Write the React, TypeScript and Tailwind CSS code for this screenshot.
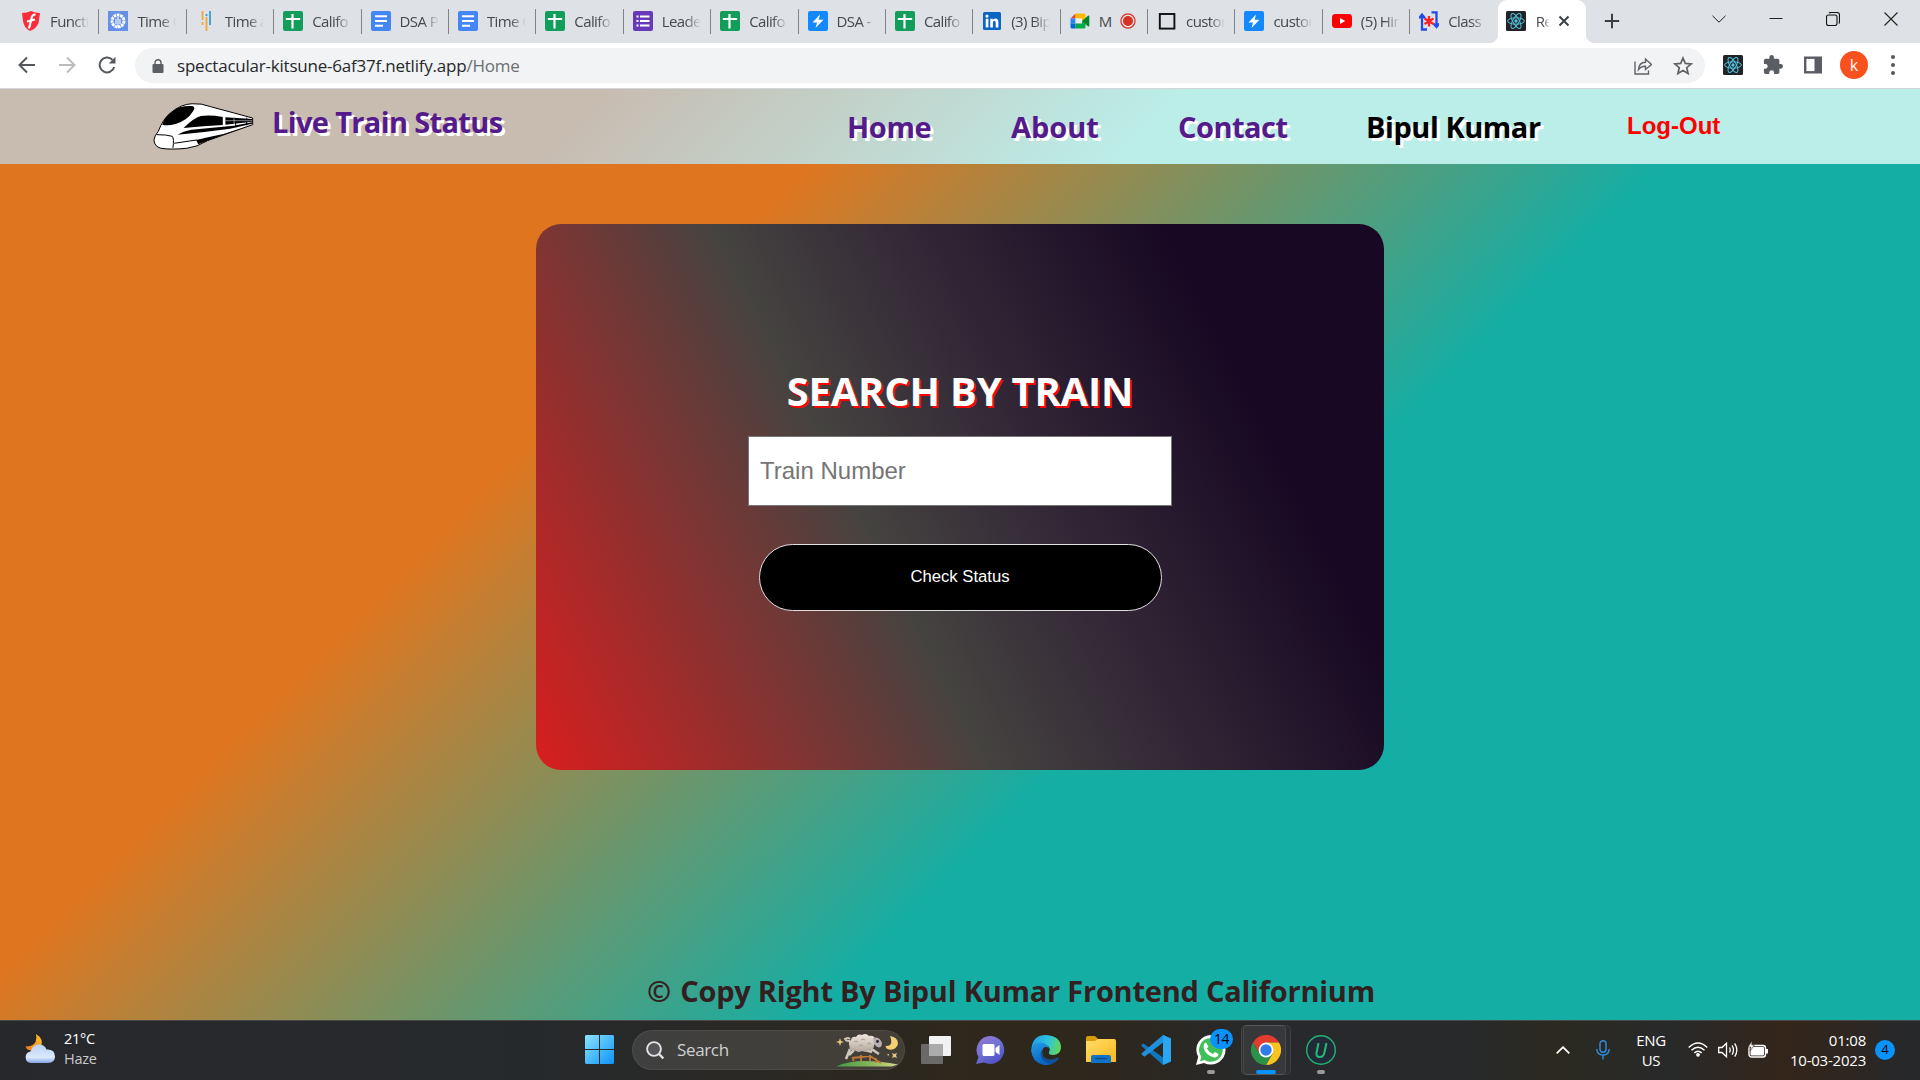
import type { ReactNode } from 'react';

/* ---------- favicons ---------- */

const Shield = () => (
  <svg viewBox="0 0 20 20" className="h-5 w-5">
    <path d="M1 2 Q6 2 10 0 Q14 2 19 2 L17.5 12 Q16 17 9 20 Q3 17 2 10Z" fill="#fb2c3a" />
    <path d="M14.5 3.500 Q11 3.500 10.500 7.500 L8 17.500 M6 10.500 L14 8.500" stroke="#fff" strokeWidth="2.200" fill="none" />
  </svg>
);
const Gear = () => (
  <svg viewBox="0 0 20 20" className="h-5 w-5">
    <rect width="20" height="20" fill="#6490e6" />
    <circle cx="10" cy="10" r="6" fill="none" stroke="#fff" strokeWidth="3" strokeDasharray="2.6 .7" />
    <path d="M10 6 V17 M8 8 V13 M12 8 V13" stroke="#fff" strokeWidth="1.100" />
  </svg>
);
const Bars = () => (
  <svg viewBox="0 0 20 20" className="h-5 w-5">
    <path d="M6.500 0 V9 M6.500 11 V14 M10.500 6 V20" stroke="#f2a541" strokeWidth="1.800" />
    <path d="M10.500 3 V5 M14 0 V14" stroke="#2ba3dc" strokeWidth="1.800" />
  </svg>
);
const Sheets = () => (
  <svg viewBox="0 0 20 20" className="h-5 w-5">
    <rect width="20" height="20" rx="2" fill="#129e5a" />
    <path d="M9.500 3 V17.500 M2.800 8 H17.200" stroke="#fff" strokeWidth="2.200" />
  </svg>
);
const Docs = () => (
  <svg viewBox="0 0 20 20" className="h-5 w-5">
    <rect width="20" height="20" rx="2" fill="#4486f4" />
    <path d="M4 5.200 H16 M4 10 H16 M4 14.800 H12" stroke="#fff" strokeWidth="2" />
  </svg>
);
const Forms = () => (
  <svg viewBox="0 0 20 20" className="h-5 w-5">
    <rect width="20" height="20" rx="2" fill="#673ab7" />
    <path d="M7 5.500 H16.500 M7 10 H16.500 M7 14.500 H16.500 M3.500 5.500 H5.500 M3.500 10 H5.500 M3.500 14.500 H5.500" stroke="#fff" strokeWidth="2" />
  </svg>
);
const Bolt = () => (
  <svg viewBox="0 0 20 20" className="h-5 w-5">
    <rect width="20" height="20" rx="2" fill="#1389fd" />
    <path d="M12 3.500 L4.500 11.500 H9 L7.500 17 L15.500 8.700 H10.700Z" fill="#fff" />
  </svg>
);
const LinkedIn = () => (
  <svg viewBox="0 0 20 20" className="h-5 w-5">
    <rect x="1" y="1" width="18" height="18" rx="1.500" fill="#0a66c2" />
    <rect x="3.700" y="7.700" width="2.700" height="8.700" fill="#fff" />
    <circle cx="5" cy="5.100" r="1.600" fill="#fff" />
    <path d="M8.200 7.700 H10.800 V9 Q11.600 7.500 13.500 7.500 Q16.400 7.500 16.400 11 V16.400 H13.700 V11.700 Q13.700 9.800 12.400 9.800 Q10.900 9.800 10.900 11.800 V16.400 H8.200Z" fill="#fff" />
  </svg>
);
const Meet = () => (
  <svg viewBox="0 0 20 20" className="h-5 w-5">
    <path d="M0.500 7.500 L5.500 2.500 V7.500Z" fill="#e94235" />
    <path d="M5.500 2.500 H14 Q15.500 2.500 15.500 4 V8 L12 10 V7.500 H5.500Z" fill="#ffba00" />
    <path d="M.5 7.500 H5.500 V12.500 H.5Z" fill="#2684fc" />
    <path d="M.5 12.500 H5.500 V17.500 H2 Q.5 17.500 .5 16Z" fill="#0066da" />
    <path d="M5.500 7.500 H12 V12.500 H5.500Z" fill="#e9eef0" />
    <path d="M5.500 12.500 H12 V10 L15.500 12 V16 Q15.500 17.500 14 17.500 H5.500Z" fill="#00ac47" />
    <path d="M12 10 L18 4.800 Q19.300 4.200 19.300 5.500 V14.800 Q19.300 16 18 15.200Z" fill="#00832d" />
  </svg>
);
const Square = () => (
  <svg viewBox="0 0 20 20" className="h-5 w-5">
    <rect x="2.800" y="3" width="14.600" height="14.600" fill="none" stroke="#111" strokeWidth="1.900" />
  </svg>
);
const YouTube = () => (
  <svg viewBox="0 0 20 20" className="h-5 w-5">
    <rect x="0" y="3" width="20" height="14" rx="3.400" fill="#f00" />
    <path d="M8 7 L13.300 10 L8 13Z" fill="#fff" />
  </svg>
);
const ClassIcon = () => (
  <svg viewBox="0 0 20 20" className="h-5 w-5">
    <path d="M3 5 V18.500 H8 M0 7.200 L3 3.600 L6 7.200 M12.500 1.300 H17.500 V14 M14.500 12.500 L17.500 16 L20.300 12.500" fill="none" stroke="#1f4be8" strokeWidth="2.300" />
    <path d="M10 5 V15.500 M5.500 7.600 L14.500 12.900 M14.500 7.600 L5.500 12.900" stroke="#f22" strokeWidth="2.300" />
  </svg>
);
const ReactIcon = () => (
  <svg viewBox="0 0 20 20" className="h-5 w-5">
    <rect width="20" height="20" rx="1.500" fill="#212327" />
    <g fill="none" stroke="#53c1de" strokeWidth="1">
      <ellipse cx="10" cy="10" rx="8.400" ry="3.200" />
      <ellipse cx="10" cy="10" rx="8.400" ry="3.200" transform="rotate(60 10 10)" />
      <ellipse cx="10" cy="10" rx="8.400" ry="3.200" transform="rotate(120 10 10)" />
    </g>
    <circle cx="10" cy="10" r="1.700" fill="#53c1de" />
  </svg>
);
const Record = () => (
  <svg viewBox="0 0 16 16" className="ml-[1px] h-4 w-4 shrink-0">
    <circle cx="8" cy="8" r="7.100" fill="none" stroke="#d93025" strokeWidth="1.200" />
    <circle cx="8" cy="8" r="5" fill="#d93025" />
  </svg>
);

type TabInfo = { icon: ReactNode; title: string; rec?: boolean };
const tabs: TabInfo[] = [
  { icon: <Shield />, title: 'Functi' },
  { icon: <Gear />, title: 'Time C' },
  { icon: <Bars />, title: 'Time a' },
  { icon: <Sheets />, title: 'Califo' },
  { icon: <Docs />, title: 'DSA P' },
  { icon: <Docs />, title: 'Time C' },
  { icon: <Sheets />, title: 'Califo' },
  { icon: <Forms />, title: 'Leade' },
  { icon: <Sheets />, title: 'Califo' },
  { icon: <Bolt />, title: 'DSA -' },
  { icon: <Sheets />, title: 'Califo' },
  { icon: <LinkedIn />, title: '(3) Bip' },
  { icon: <Meet />, title: 'M', rec: true },
  { icon: <Square />, title: 'custor' },
  { icon: <Bolt />, title: 'custor' },
  { icon: <YouTube />, title: '(5) Hin' },
  { icon: <ClassIcon />, title: 'Class' },
];

function TabStrip() {
  return (
    <div className="flex h-[43px] bg-[#dee1e6] pl-[12px] text-[15px] tracking-[-0.6px] text-[#45494d]">
      {tabs.map((t, i) => (
        <div key={i} className="relative flex w-[87.400px] shrink-0 items-center pb-[2px] pl-[9px]">
          <div className="shrink-0">{t.icon}</div>
          <span
            className={
              'ml-[9px] overflow-hidden whitespace-nowrap leading-5 ' +
              (t.rec ? 'w-[20px]' : 'w-[39px] [mask-image:linear-gradient(to_right,black_60%,transparent)]')
            }
          >
            {t.title}
          </span>
          {t.rec && <Record />}
          {i < 16 && <i className="absolute right-0 top-[9px] h-[25px] w-px bg-[#808388]" />}
        </div>
      ))}
      <div className="relative flex w-[88px] shrink-0 items-center rounded-t-[9px] bg-white pb-[2px] pl-[8px]">
        <i className="absolute -left-[9px] bottom-0 h-[9px] w-[9px] bg-[radial-gradient(circle_at_0_0,transparent_9px,white_9.500px)]" />
        <i className="absolute -right-[9px] bottom-0 h-[9px] w-[9px] bg-[radial-gradient(circle_at_100%_0,transparent_9px,white_9.500px)]" />
        <div className="shrink-0"><ReactIcon /></div>
        <span className="ml-[10px] w-[14px] overflow-hidden whitespace-nowrap leading-5 [mask-image:linear-gradient(to_right,black_50%,transparent)]">Re</span>
        <svg viewBox="0 0 12 12" className="ml-[8px] h-3 w-3"><path d="M1.500 1.500 L10.500 10.500 M10.500 1.500 L1.500 10.500" stroke="#3c4043" strokeWidth="2" /></svg>
      </div>
      <svg viewBox="0 0 16 16" className="ml-[18px] mt-[13px] h-4 w-4"><path d="M8 .8 V15.200 M.8 8 H15.200" stroke="#3c4043" strokeWidth="2" /></svg>
      <div className="ml-auto flex h-[37px] items-center text-black">
        <svg viewBox="0 0 14 8" className="mr-[43px] h-2 w-[14px]"><path d="M.5 .8 L7 7.200 L13.500 .8" fill="none" stroke="#222" /></svg>
        <svg viewBox="0 0 14 14" className="mr-[43px] h-[14px] w-[14px]"><path d="M.5 6.500 H13.500" stroke="#222" /></svg>
        <svg viewBox="0 0 14 14" className="mr-[44px] h-[14px] w-[14px]"><rect x=".5" y="3" width="10.500" height="10.500" rx="2" fill="none" stroke="#111" strokeWidth="1.100" /><path d="M3 1 Q3.600 .5 5 .5 H11 Q13.500 .5 13.500 3 V9.500 Q13.500 11 12.800 11.500" fill="none" stroke="#111" strokeWidth="1.100" /></svg>
        <svg viewBox="0 0 14 14" className="mr-[22px] h-[14px] w-[14px]"><path d="M.5 .5 L13.500 13.500 M13.500 .5 L.5 13.500" stroke="#222" strokeWidth="1.100" /></svg>
      </div>
    </div>
  );
}

function Toolbar() {
  return (
    <div className="flex h-[46px] items-center border-b border-[#d5d6d9] bg-white pb-px pl-[18px]">
      <svg viewBox="0 0 18 18" className="h-[18px] w-[18px]"><path d="M17 9 H1.500 M9 1.500 L1.500 9 L9 16.500" fill="none" stroke="#54585d" strokeWidth="2" /></svg>
      <svg viewBox="0 0 18 18" className="ml-[22px] h-[18px] w-[18px]"><path d="M1 9 H16.500 M9 1.500 L16.500 9 L9 16.500" fill="none" stroke="#babcbe" strokeWidth="2" /></svg>
      <svg viewBox="0 0 18 18" className="ml-[22px] h-[18px] w-[18px]"><path d="M16.200 11 A7.400 7.400 0 1 1 14.400 3.800" fill="none" stroke="#54585d" strokeWidth="2" /><path d="M17.500 .8 V7.500 H10.800Z" fill="#54585d" /></svg>
      <div className="ml-[19px] mt-px flex h-[35px] w-[1570px] items-center rounded-full bg-[#f1f3f4] pl-[17px]">
        <svg viewBox="0 0 12 14" className="h-[14px] w-[12px]"><rect x=".5" y="5" width="11" height="9" rx="1" fill="#5b5f64" /><path d="M3 6 V3.700 A3 3 0 0 1 9 3.700 V6" fill="none" stroke="#5b5f64" strokeWidth="1.400" /></svg>
        <span className="ml-[13px] whitespace-nowrap text-[17px] tracking-[-0.220px] text-[#26282b]">
          spectacular-kitsune-6af37f.netlify.app<span className="text-[#6a6e73]">/Home</span>
        </span>
        <svg viewBox="0 0 18 18" className="ml-auto h-[18px] w-[18px]"><path d="M1 4.500 V17 H14.500 V13.500" fill="none" stroke="#5f6368" strokeWidth="1.400" /><path d="M4.500 12.500 Q5 5.500 11.500 5.300 V2 L17.500 7.500 L11.500 12.500 V9.200 Q7 9 4.500 12.500Z" fill="none" stroke="#5f6368" strokeWidth="1.400" /></svg>
        <svg viewBox="0 0 20 20" className="ml-[21px] mr-[12px] h-5 w-5"><path d="M10 2 L12.300 7.400 L18.200 7.900 L13.700 11.700 L15.100 17.400 L10 14.400 L4.900 17.400 L6.300 11.700 L1.800 7.900 L7.700 7.400Z" fill="none" stroke="#5f6368" strokeWidth="1.700" /></svg>
      </div>
      <div className="ml-[18px]"><ReactIcon /></div>
      <svg viewBox="1 1 22 22" className="ml-[20px] h-5 w-5"><path d="M20.500 11H19V7a2 2 0 0 0-2-2h-4V3.500a2.500 2.500 0 0 0-5 0V5H4a2 2 0 0 0-2 2v3.800h1.500a2.700 2.700 0 0 1 0 5.400H2V20a2 2 0 0 0 2 2h3.800v-1.500a2.700 2.700 0 0 1 5.400 0V22H17a2 2 0 0 0 2-2v-4h1.500a2.500 2.500 0 0 0 0-5z" fill="#5a5e64" /></svg>
      <svg viewBox="0 0 18 18" className="ml-[21px] h-[18px] w-[18px]"><rect x="1.200" y="1.700" width="15.600" height="14.600" fill="none" stroke="#5a5e64" strokeWidth="2.400" /><rect x="10.500" y="1" width="7" height="16" fill="#5a5e64" /></svg>
      <div className="ml-[18px] flex h-7 w-7 items-center justify-center rounded-full bg-[#f8511d] pb-px text-[16px] text-white">k</div>
      <div className="ml-[23px] flex flex-col gap-[4px]">
        <i className="h-1 w-1 rounded-full bg-[#54585d]" /><i className="h-1 w-1 rounded-full bg-[#54585d]" /><i className="h-1 w-1 rounded-full bg-[#54585d]" />
      </div>
    </div>
  );
}

/* ---------- page ---------- */

const TrainLogo = () => (
  <svg viewBox="68 50 304 144" className="h-[48px] w-[101px] shrink-0">
    <path d="M71 164 Q72 152 84 138 Q98 100 122 82 Q152 56 186 55 Q214 53 242 64 L368 98 V118 L232 166 Q200 186 170 189 Q120 194 92 189 Q72 184 71 164Z" fill="#fff" stroke="#000" strokeWidth="3" />
    <path d="M96 118 Q104 92 126 78 Q148 60 186 62 Q198 66 188 78 Q172 104 136 116 Q112 122 96 118Z" />
    <path d="M160 128 Q190 98 212 92 Q240 88 278 95 V119 Q220 122 160 128Z" />
    <path d="M286 96 L366 101 V109 L286 118Z" />
    <path d="M142 148 Q158 138 184 133 L310 121 L366 111 V115 L300 130 Q220 141 142 148Z" />
    <path d="M198 164 Q240 154 280 146 L356 122 L270 152 L204 177 Z" />
    <path d="M78 148 Q110 148 126 153 Q132 160 128 188 M132 174 L200 164 M350 97 V120 M314 97 L318 126" fill="none" stroke="#000" strokeWidth="3" />
    <path d="M283 90 V124 M312 96 V122 M286 106 H366" stroke="#fff" strokeWidth="1.500" />
  </svg>
);

function Header() {
  return (
    <header className="flex h-[75px] bg-[linear-gradient(135deg,#c8bbb0_30%,#bbeee9_60%)] pl-[153px] text-[29px] font-bold leading-[40px] text-[#551a8b] [&_span]:whitespace-nowrap [&_span]:[text-shadow:3px_3px_#fff]">
      <div className="mt-[13px]"><TrainLogo /></div>
      <span className="ml-[18px] mt-[13px] w-[575px] tracking-[-0.650px]">Live Train Status</span>
      <span className="mt-[18px] w-[164px] tracking-[-0.350px]">Home</span>
      <span className="mt-[18px] w-[167px]">About</span>
      <span className="mt-[18px] w-[188px] tracking-[-0.500px]">Contact</span>
      <span className="mt-[18px] w-[261px] tracking-[-0.450px] text-black">Bipul Kumar</span>
      <div className="mt-[17px] whitespace-nowrap font-['Liberation_Sans',Arial,sans-serif] text-[24px] text-[#f00]">Log-Out</div>
    </header>
  );
}

function SearchCard() {
  return (
    <section className="mx-auto mt-[60px] flex h-[546px] w-[848px] flex-col items-center rounded-[25px] bg-[linear-gradient(63deg,#d91e1e_0%,#454340_40.300%,#322736_58%,#180823_80.300%)]">
      <h1 className="mt-[139px] whitespace-nowrap text-[40px] font-bold leading-[56px] tracking-[-0.250px] text-white [text-shadow:1.500px_1.500px_#f00]">SEARCH BY TRAIN</h1>
      <input
        placeholder="Train Number"
        className="mt-[17px] h-[70px] w-[424px] border border-[#767676] bg-white pl-[11px] font-['Liberation_Sans',Arial,sans-serif] text-[24px] placeholder:text-[#757575]"
      />
      <button className="mt-[38px] h-[67px] w-[403px] rounded-[34px] border-[1.500px] border-[#e2dfe1] bg-black pb-px font-['Liberation_Sans',Arial,sans-serif] text-[16.700px] text-white">
        Check Status
      </button>
    </section>
  );
}

/* ---------- taskbar ---------- */

const Weather = () => (
  <svg viewBox="0 0 30 30" className="h-[30px] w-[30px]">
    <defs>
      <linearGradient id="moon" x1="0" y1="1" x2="1" y2="0"><stop stopColor="#f57a17" /><stop offset="1" stopColor="#fbc52f" /></linearGradient>
      <linearGradient id="cloud" x1="0" y1="0" x2="0" y2="1"><stop stopColor="#b9d2f7" /><stop offset=".7" stopColor="#dbe8fa" /><stop offset="1" stopColor="#86a5e4" /></linearGradient>
    </defs>
    <path d="M11 0 Q19 5 16 12 Q12 18 4 16 Q1 15 .5 12.500 Q8 12.500 10.500 8 Q12 4 11 0Z" fill="url(#moon)" />
    <path d="M6 29 A5.800 5.800 0 0 1 5.500 17.500 Q7.500 10.500 14 10.500 Q19.500 10.500 21.500 15.500 Q30 15 30 22.500 Q30 29 23 29Z" fill="url(#cloud)" />
  </svg>
);
const Start = () => (
  <svg viewBox="0 0 29 29" className="h-[29px] w-[29px]">
    <defs><linearGradient id="win" x1="0" y1="0" x2="1" y2="1"><stop stopColor="#8be3ff" /><stop offset="1" stopColor="#0c93f8" /></linearGradient></defs>
    <path d="M1 0H14V14H0V1Z M15 0H28L29 1V14H15Z M0 15H14V29H1L0 28Z M15 15H29V28L28 29H15Z" fill="url(#win)" />
  </svg>
);
const Sheep = () => (
  <svg viewBox="0 0 64 35" className="h-[35px] w-[64px]">
    <defs>
      <linearGradient id="hill" x1="0" y1="0" x2="1" y2="0"><stop stopColor="#3f9a48" /><stop offset=".5" stopColor="#7fb257" /><stop offset="1" stopColor="#d3d98a" /></linearGradient>
      <linearGradient id="wool" x1="0" y1="0" x2="0" y2="1"><stop stopColor="#efe8e0" /><stop offset="1" stopColor="#b5a79c" /></linearGradient>
    </defs>
    <path d="M0 34.500 Q12 29 28 29 Q46 29 62 32.500 L56 34.500Z" fill="url(#hill)" />
    <path d="M17 29 L18 25 M25 29 V23 M34 29 V23 M40 31 V26 M16 26 L34 24 L45 31" stroke="#bd7b36" strokeWidth="1.800" fill="none" />
    <path d="M4 6 L5 9 L8 10 L5 11 L4 14 L3 11 L0 10 L3 9Z M51.500 22 h1.500 v1.500 h-1.500z M56 21 l2.500 1 2.500 -1 -1 2.500 1 2.500 -2.500 -1 -2.500 1 1 -2.500z M8 6 h1.500 v1.500 h-1.500z" fill="#e6c67c" />
    <path d="M14 17 L10 27 M18 18 L13 23 M34 16 L43 22 M29 18 L36 20" stroke="#cfc6bc" strokeWidth="2.600" />
    <path d="M14 9 Q8 9 10 6.500 Q12 5 14 7" stroke="#cfc6bc" strokeWidth="1.800" fill="none" />
    <path d="M15 8 Q16 4 20 5 Q22 1.500 26 3 Q30 0.500 33 4 Q38 3 39 7 Q42 10 38 13 Q38 18 33 17.500 Q30 21 26 19 Q22 21 19 18.500 Q13 19 13.500 14 Q11.500 10 15 8Z" fill="url(#wool)" />
    <path d="M18 10 Q20 8 22 10 M25 8 Q27 6 29 8 M23 14 Q25 12 27 14 M31 12 Q33 10 35 12" stroke="#a99c91" strokeWidth="1" fill="none" />
    <path d="M37 6 Q43 4 46 11 Q46 15 43 15.500 Q38 15 37 6Z" fill="#b8aeb1" />
    <circle cx="41.500" cy="9.500" r="1.400" fill="#2b2530" />
    <path d="M54 4 Q62 5 62 12 Q60 18.500 53 17.500 Q50 17 49.500 14 Q58 14.500 54 4Z" fill="#f4cf74" />
  </svg>
);
const TaskView = () => (
  <svg viewBox="0 0 30 28" className="h-[28px] w-[30px]">
    <rect x="8" y="0" width="22" height="20" rx="1" fill="#f2f2f2" />
    <rect x="0" y="8" width="22" height="20" rx="1" fill="#6b6a69" />
    <rect x="8" y="8" width="14" height="12" fill="#ababab" />
  </svg>
);
const Chat = () => (
  <svg viewBox="0 0 30 28" className="h-[28px] w-[30px]">
    <defs><linearGradient id="chat" x1="0" y1="0" x2=".6" y2="1"><stop stopColor="#9a76c8" /><stop offset=".5" stopColor="#7474d6" /><stop offset="1" stopColor="#5053c4" /></linearGradient></defs>
    <path d="M15 0 A14 14 0 1 1 8 26.500 L0 28 L2.500 21 A14 14 0 0 1 15 0Z" fill="url(#chat)" />
    <rect x="6.500" y="8" width="12" height="12" rx="1.500" fill="#fff" /><path d="M19.500 12 L23.500 9 V19 L19.500 16Z" fill="#fff" />
  </svg>
);
const Edge = () => (
  <svg viewBox="0 0 30 30" className="h-[30px] w-[30px]">
    <defs>
      <linearGradient id="edgeTop" x1="0" y1=".3" x2="1" y2=".5"><stop stopColor="#1d9ee8" /><stop offset=".55" stopColor="#2fc3dc" /><stop offset="1" stopColor="#62d957" /></linearGradient>
      <linearGradient id="edgeBody" x1="0" y1="0" x2=".4" y2="1"><stop stopColor="#249be6" /><stop offset="1" stopColor="#0a63c4" /></linearGradient>
    </defs>
    <path d="M.5 13 Q2 0 15 0 Q30 1 30 13 Q29 20 22 20 Q17 20 18 17 Q20 14 17 11 Q8 5 .5 13Z" fill="url(#edgeTop)" />
    <path d="M0 15 Q1 8 9 7.500 Q16 8 18 13 Q12 10 11 17 Q12 27 23 27.500 Q18 31 12 29.700 Q1 27 0 15Z" fill="url(#edgeBody)" />
    <path d="M11 15 Q10 20 14 23 Q19 26 27 22.500 Q28.500 22 27.500 24 Q24 28.500 19 29 Q9 26 9.500 18Z" fill="#11509b" />
  </svg>
);
const Folder = () => (
  <svg viewBox="0 0 30 27" className="h-[27px] w-[30px]">
    <defs><linearGradient id="folder" x1="0" y1="0" x2="1" y2="1"><stop stopColor="#ffdc6b" /><stop offset="1" stopColor="#fbb91c" /></linearGradient></defs>
    <path d="M0 2 Q0 0 2 0 H9 L12 3 V8 H0Z" fill="#d99b0b" />
    <path d="M0 5 H9 L12 3 H28 Q30 3 30 5 V26 H0Z" fill="url(#folder)" />
    <path d="M5 27 V21 Q5 19 7 19 H23 Q25 19 25 21 V27Z" fill="#1273c6" /><path d="M9 22.500 H21" stroke="#0a4c8a" strokeWidth="1.300" />
  </svg>
);
const Code = () => (
  <svg viewBox="0 0 30 30" className="h-[30px] w-[30px]">
    <path d="M22 0 L30 3.500 V26.500 L22 30 L1 11.500 Q-.5 10.500 .8 9.500 L2.500 8.500 L22 22.500Z" fill="#1077bd" />
    <path d="M22 7.500 L3.500 21.700 L.7 19.500 Q0 18.500 1 18 L22 0Z" fill="#1f91df" />
    <path d="M22 0 L30 3.500 V26.500 L22 30Z" fill="#2aa7f2" />
  </svg>
);
const WhatsApp = () => (
  <svg viewBox="0 0 30 30" className="h-[30px] w-[30px]">
    <path d="M15 0 A14.800 14.800 0 1 1 8 28 L0 30 L2.200 22 A14.800 14.800 0 0 1 15 0Z" fill="#fff" />
    <path d="M15 3 A11.900 11.900 0 1 1 8.500 25 L4 26.200 L5.300 21.800 A11.900 11.900 0 0 1 15 3Z" fill="#3fbf57" />
    <path d="M10 7.500 L12.500 11.500 L11 13.500 Q13 17.500 17 19 L19 17 L22.500 19 Q22 23 18 22.500 Q9 20 7.500 12 Q7.500 8 10 7.500Z" fill="#fff" />
  </svg>
);
const ChromeIcon = () => (
  <svg viewBox="0 0 30 30" className="h-[30px] w-[30px]">
    <path d="M2 7.500 A15 15 0 0 1 28 7.500 H15 L8.500 18.700Z" fill="#e33b2e" />
    <path d="M28 7.500 A15 15 0 0 1 15 30 L21.500 18.700 L15 7.500Z" fill="#fcc31e" />
    <path d="M15 30 A15 15 0 0 1 2 7.500 L8.500 18.700 L15 22.500 L21.500 18.700Z" fill="#2a9347" />
    <circle cx="15" cy="15" r="7.400" fill="#fff" /><circle cx="15" cy="15" r="5.700" fill="#2f7bea" />
  </svg>
);
const UIcon = () => (
  <svg viewBox="0 0 30 30" className="h-[30px] w-[30px]">
    <circle cx="15" cy="15" r="14.300" fill="#242938" stroke="#1fb673" strokeWidth="1.400" />
    <path d="M12.500 8 L10.500 18 Q10 22 13.800 22 Q17.500 22 18.300 18 L20.500 8" fill="none" stroke="#1fbd78" strokeWidth="2" />
  </svg>
);

function Taskbar() {
  return (
    <footer className="relative flex h-[60px] items-center border-t border-[#4c4a47] bg-[linear-gradient(to_right,#27282b_0%,#26292c_28%,#2b2822_42%,#2e271b_52%,#2d271d_58%,#27292c_66%,#27292b_76%,#2b2920_81%,#28292a_87%,#33251a_93%,#2e2620_96%,#27282a_99%)] pb-[2px] text-[15px] text-white">
      <div className="ml-[25px] pb-[2px]"><Weather /></div>
      <div className="ml-[9px] w-[100px] pb-px text-[14.500px] leading-5 tracking-[-0.300px]">
        <div>21°C</div><div className="text-[#c9c9c9]">Haze</div>
      </div>
      <div className="ml-[421px]"><Start /></div>
      <div className="ml-[18px] flex h-10 w-[273px] items-center rounded-full border border-[#ffffff10] bg-[#ffffff1c] pl-[13px]">
        <svg viewBox="0 0 18 18" className="h-[18px] w-[18px]"><circle cx="8" cy="8" r="6.900" fill="#55555a" stroke="#e4e4e4" strokeWidth="1.900" /><path d="M12.800 12.800 L17.300 17.500" stroke="#e4e4e4" strokeWidth="2.300" /></svg>
        <span className="ml-[13px] text-[17px] tracking-[-0.350px] text-[#d0d0d0]">Search</span>
        <div className="ml-auto mr-[4px]"><Sheep /></div>
      </div>
      <div className="ml-[16px] flex items-center gap-[25px]">
        <TaskView /><Chat /><Edge /><Folder /><Code />
        <div className="relative">
          <WhatsApp />
          <div className="absolute -top-[6px] left-[14px] flex h-[20px] w-[23px] items-center justify-center rounded-full bg-[#0a92fb] text-[14px] tracking-[-0.500px] text-black">14</div>
          <i className="absolute -bottom-[9px] left-[11px] h-1 w-2 rounded-full bg-[#9a9a9a]" />
        </div>
        <div className="relative">
          <i className="absolute -left-[8px] -top-[10px] h-[50px] w-[48px] rounded-[5px] border border-[#ffffff14] bg-[#ffffff08]" />
          <i className="absolute -left-[10px] -top-[10px] h-[50px] w-[45px] rounded-[5px] border border-[#ffffff18] bg-[#ffffff0c]" />
          <div className="relative"><ChromeIcon /></div>
          <i className="absolute -bottom-[9px] left-[5px] h-1 w-5 rounded-full bg-[#0a92fb]" />
        </div>
        <div className="relative"><UIcon /><i className="absolute -bottom-[9px] left-[11px] h-1 w-2 rounded-full bg-[#9a9a9a]" /></div>
      </div>
      <svg viewBox="0 0 14 8" className="ml-[220px] h-2 w-[14px]"><path d="M.7 7.300 L7 1.200 L13.300 7.300" fill="none" stroke="#fff" strokeWidth="1.800" /></svg>
      <svg viewBox="0 0 14 20" className="ml-[26px] h-5 w-[14px]"><rect x="4" y=".7" width="6" height="11.500" rx="3" fill="none" stroke="#2d8fe0" strokeWidth="1.400" /><path d="M.8 9 Q1 15 7 15 Q13 15 13.200 9 M7 15 V19.500" fill="none" stroke="#2d8fe0" strokeWidth="1.400" /></svg>
      <div className="ml-[26px] w-[30px] whitespace-nowrap text-center text-[15px] leading-5 tracking-[-0.300px]">ENG<br />US</div>
      <svg viewBox="0 0 20 15" className="ml-[22px] h-[15px] w-5"><g fill="none" stroke="#fff" strokeWidth="1.400"><path d="M.7 5.500 Q10 -3.500 19.300 5.500 M3.500 8.300 Q10 2 16.500 8.300 M6.300 11 Q10 7.500 13.700 11" /></g><circle cx="10" cy="12.800" r="1.900" fill="#fff" /></svg>
      <svg viewBox="0 0 20 16" className="ml-[10px] h-4 w-5"><path d="M.7 5.500 H4 L8.500 1.200 V14.800 L4 10.500 H.7Z M11.500 5.500 Q13 8 11.500 10.500 M14 3.300 Q17 8 14 12.700 M16.700 1.300 Q21 8 16.700 14.700" fill="none" stroke="#fff" strokeWidth="1.300" /></svg>
      <svg viewBox="0 0 20 17" className="ml-[10px] h-[17px] w-5"><rect x="1" y="4.500" width="16.500" height="11.500" rx="2.500" fill="none" stroke="#fff" strokeWidth="1.400" /><rect x="2.500" y="6" width="13.500" height="8.500" rx="1" fill="#fff" /><path d="M18 8 H20 V12.500 H18Z" fill="#fff" /><path d="M4 0 L0 6 H3 L2 10 L6.500 4 H3.800Z" fill="#fff" stroke="#30261c" strokeWidth=".6" /></svg>
      <div className="ml-[18px] w-[80px] whitespace-nowrap text-right text-[15px] leading-5 tracking-[-0.220px]">01:08<br />10-03-2023</div>
      <div className="ml-[9px] flex h-5 w-5 items-center justify-center rounded-full bg-[#0a92fb] text-[13px] text-black">4</div>
    </footer>
  );
}

export default function App() {
  return (
    <div className="flex h-[1080px] w-[1920px] flex-col overflow-hidden font-['Open_Sans','Noto_Sans',sans-serif]">
      <TabStrip />
      <Toolbar />
      <main className="flex h-[931px] flex-col bg-[linear-gradient(135deg,#df761f_31%,#15aea5_61%)]">
        <Header />
        <SearchCard />
        <p className="ml-[647px] mt-[201px] whitespace-nowrap text-[29px] font-bold leading-[40px] tracking-[-0.230px] text-[#331f1f]">
          <span className="mr-[2px]">©</span> Copy Right By Bipul Kumar Frontend Californium
        </p>
      </main>
      <Taskbar />
    </div>
  );
}
